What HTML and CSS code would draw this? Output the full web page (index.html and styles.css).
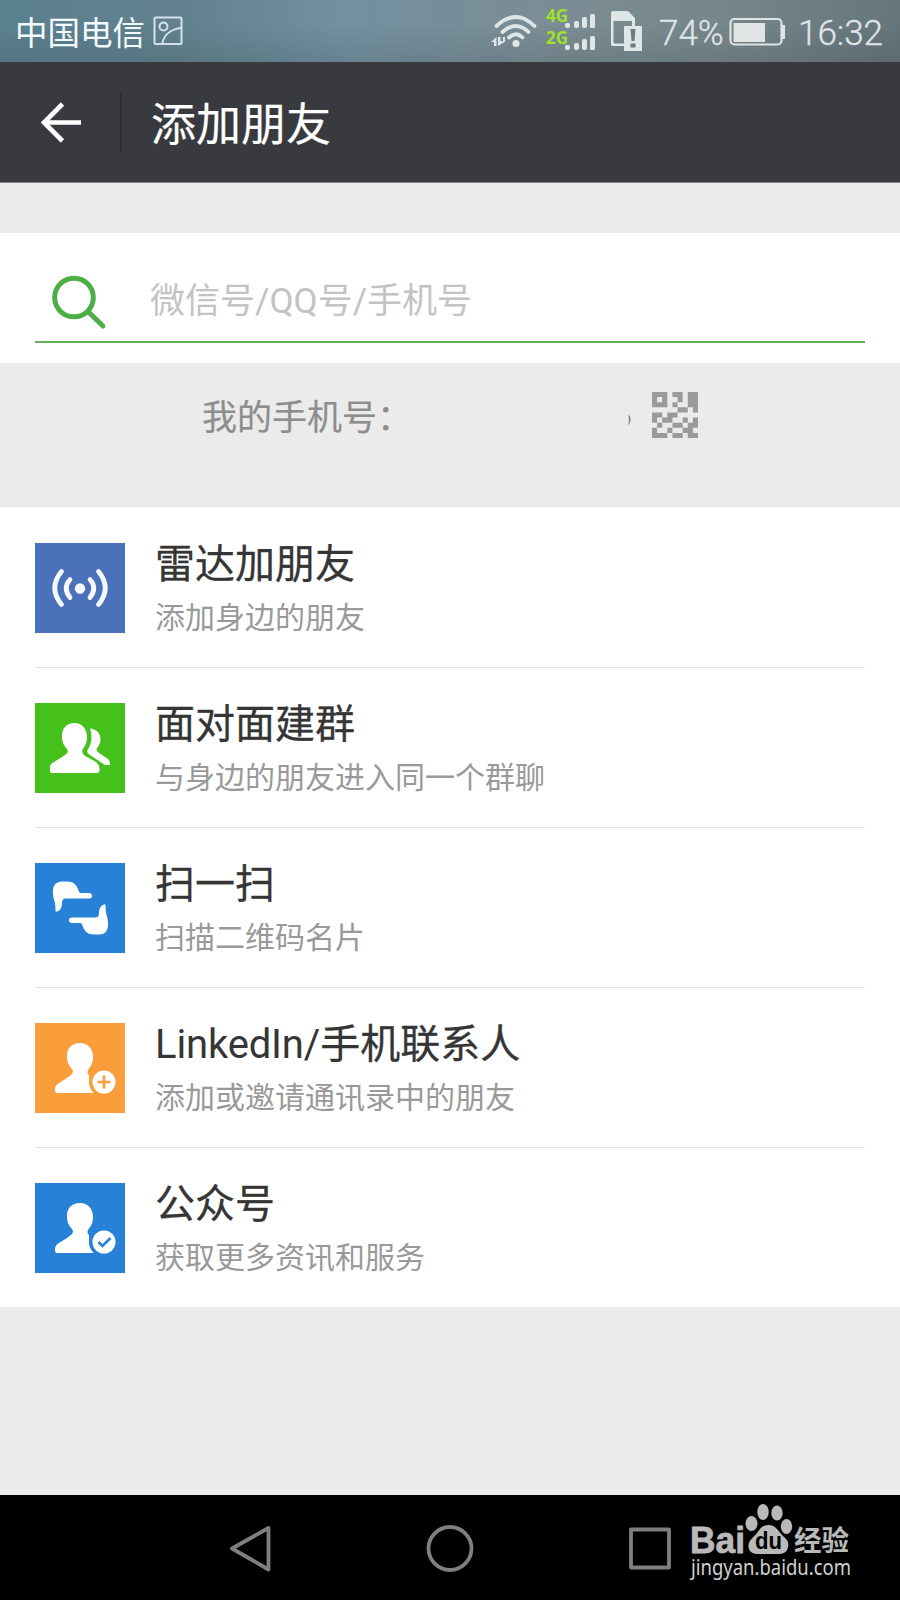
FILE: index.html
```html
<!DOCTYPE html>
<html lang="zh-CN">
<head>
<meta charset="utf-8">
<title>添加朋友</title>
<link rel="stylesheet" href="styles.css">
</head>
<body>
<div class="screen">
  <div class="status">
    <span class="carrier">中国电信</span>
    <svg class="picture" width="30" height="30" viewBox="0 0 30 30" fill="none" stroke="#d3e3ea" stroke-width="2"><rect x="1.500" y="1.500" width="27" height="26.500" rx="1"/><circle cx="10.500" cy="10.500" r="4"/><path d="M9 28C11 19 18 13 28 12"/></svg>
    <svg class="signals" width="156" height="62" viewBox="0 0 156 62">
      <g fill="none" stroke="#dfe6e8" stroke-width="3.800" stroke-linecap="round"><path d="M5.500 26Q25 8 43.500 26M11.500 32Q25 20 37.500 32M18 37.500Q25 31 31.500 37.500"/></g>
      <circle cx="25" cy="43.500" r="3.600" fill="#dfe6e8"/>
      <path fill="#dfe6e8" d="M0 42L5.500 37V46H3V42ZM7 37H9.500V41H15L7 46ZM12 37h2v4h-2z"/>
      <text class="net" x="55" y="22">4G</text><text class="net" x="55" y="43.500">2G</text>
      <g fill="#dfe6e8"><rect x="74" y="23" width="5" height="5" rx="2"/><rect x="83" y="21" width="5" height="7" rx="2"/><rect x="91" y="17" width="5" height="11" rx="2"/><rect x="99" y="14" width="5" height="14" rx="1.500"/><rect x="74" y="45" width="5" height="5" rx="2"/><rect x="83" y="43" width="5" height="7" rx="2"/><rect x="91" y="39" width="5" height="11" rx="2"/><rect x="99" y="36" width="5" height="14" rx="1.500"/></g>
      <path fill="#dfe6e8" fill-rule="evenodd" d="M122 11H137L144 18V26H151V51H133V46H121Q120 46 120 44V13Q120 11 122 11ZM122.500 21V43.500H133V26H141V21Z"/>
      <path fill="#6d7b80" d="M139.500 29H144.500L143.500 41H140.500ZM139.500 43.500h5v4h-5z"/>
    </svg>
    <span class="percent">74%</span>
    <svg class="battery" width="56" height="30" viewBox="0 0 56 30"><rect x="1.500" y="3" width="51" height="25.500" rx="4" fill="none" stroke="#dfe4e5" stroke-width="2.200"/><path fill="#dfe4e5" d="M4.500 7H36V26H4.500zM53 9h3v14h-3z"/></svg>
    <span class="clock">16:32</span>
  </div>

  <div class="header">
    <svg class="back" width="44" height="44" viewBox="0 0 44 44" fill="none" stroke="#fff" stroke-width="4.600"><path d="M42 22.500H5M23.500 4L5 22.500L23.500 41"/></svg>
    <div class="divider"></div>
    <h1 class="title">添加朋友</h1>
  </div>

  <div class="search">
    <div class="field">
      <svg class="glass" width="56" height="56" viewBox="0 0 56 56" fill="none" stroke="#4cae45" stroke-width="5" stroke-linecap="round"><circle cx="25" cy="23.500" r="19.300"/><path d="M40 38.500L54 52"/></svg>
      <span class="hint">微信号<i>/QQ</i>号<i>/</i>手机号</span>
    </div>
  </div>

  <div class="mine">
    <span class="mine-label">我的手机号：</span>
    <svg class="edge" width="4" height="14" viewBox="0 0 4 14"><path fill="#777" d="M0 1Q5 6 0 13Q2 7 0 1"/></svg>
    <svg class="qr" width="46" height="46" viewBox="0 0 9 9"><path fill="#9a9a9a" fill-rule="evenodd" d="M0 0h3v3h-3zM1 1v1h1v-1zM4 0h2v1h1v1h-2v-1h-1zM7 0h2v4h-1v-1h-1v-1h-1v-1h1zM4 2h1v1h-1zM5 3h2v1h-1v1h-2v1h-2v-1h1v-1h2zM0 4h2v1h-1v1h-1zM5 4h1v1h-1zM6 5h1v1h-1zM8 5h1v2h-2v-1h1zM1 6h1v1h-1zM4 6h2v1h-2zM0 7h1v1h2v1h-3zM3 7h1v1h-1zM6 7h2v1h1v1h-2v-1h-1zM4 8h2v1h-2z"/></svg>
  </div>

  <div class="list">
    <div class="row">
      <svg class="icon blue-violet" viewBox="0 0 90 90"><circle cx="45" cy="45.500" r="5.200" fill="#f3f9ff"/><path fill="none" stroke="#f3f9ff" stroke-width="4.800" stroke-linecap="round" d="M26.500 28.500Q13 45 26.500 61.500M35 36.500Q27.500 45 35 54.500M63.500 28.500Q77 45 63.500 61.500M55 36.500Q62.500 45 55 54.500"/></svg>
      <div class="body"><div class="name">雷达加朋友</div><div class="desc">添加身边的朋友</div></div>
    </div>
    <div class="row">
      <svg class="icon green" viewBox="0 0 90 90" fill="#fff"><path d="M39.500 20C47 20 52 26 52 34C52 40 50 43 47.500 46.500C46.500 51 50 53 54 55L61 59Q64.500 62 64.500 65V68Q64.500 70 62 70H17Q15 70 15 68V64Q15 61 19 59L27 54C32 51 34 49 32 46C29 43 27 39 27 33C27 25 32 20 39.500 20Z"/><path d="M55 25.500C61 26 65.500 30 65.500 36C65.500 41 63 44 61.500 46Q61 48 64 50L73 56Q75 58 75 60V62H70L55 52Q51 50 52.500 47C55 43 56.500 39 56.500 34Q56.500 29 55 25.500Z"/></svg>
      <div class="body"><div class="name">面对面建群</div><div class="desc">与身边的朋友进入同一个群聊</div></div>
    </div>
    <div class="row">
      <svg class="icon blue" viewBox="0 0 90 90" fill="#fff"><path id="hand" d="M20.500 48Q20.500 44 20 40C18 34 17 27 19 23Q21 18.500 28 18.500H32C39 18.500 41 22 43 26Q44 30 46 30H54Q57 30 57 33Q57 35.500 54 35.500H30Q27 36 27 40Q27 47 22 48.500Q20.500 49 20.500 48Z"/><use href="#hand" transform="rotate(180 45.500 45)"/></svg>
      <div class="body"><div class="name">扫一扫</div><div class="desc">扫描二维码名片</div></div>
    </div>
    <div class="row">
      <svg class="icon orange" viewBox="0 0 90 90"><path id="person" fill="#fff" d="M45 20C53 20 58 26 58 34C58 40 56 43 53 47Q51.500 50 54 52C54 58 54 65 59 70H22Q20 70 20 68V66Q20 62 24 60L32 55C38 51 39 49 37 46C34 43 32 39 32 33C32 25 37 20 45 20Z"/><circle cx="69" cy="59" r="15" fill="#fa9d3b"/><circle cx="69" cy="59" r="11.500" fill="#fff"/><path d="M62.500 59H75.500M69 52.500V65.500" stroke="#fa9d3b" stroke-width="2.600"/></svg>
      <div class="body"><div class="name"><i>LinkedIn/</i>手机联系人</div><div class="desc">添加或邀请通讯录中的朋友</div></div>
    </div>
    <div class="row">
      <svg class="icon blue" viewBox="0 0 90 90"><use href="#person"/><circle cx="69" cy="59" r="15" fill="#2782d7"/><circle cx="69" cy="59" r="11.500" fill="#fff"/><path d="M63.500 59L67.500 63L75.500 55" fill="none" stroke="#2782d7" stroke-width="2.600"/></svg>
      <div class="body"><div class="name">公众号</div><div class="desc">获取更多资讯和服务</div></div>
    </div>
  </div>

  <div class="navbar">
    <svg class="keys" width="900" height="105" viewBox="0 0 900 105">
      <g fill="none" stroke="#7f7f7f" stroke-width="3.800" stroke-linejoin="round"><path d="M232 53.500L268.500 33V74.500Z"/><circle cx="450" cy="53.500" r="21.500"/><rect x="631" y="34.500" width="38" height="38"/></g>
      <g fill="#b9b9b9"><ellipse cx="751.500" cy="28.500" rx="6" ry="7.500"/><ellipse cx="763" cy="17" rx="5.700" ry="8"/><ellipse cx="777" cy="18" rx="5.700" ry="7.500"/><ellipse cx="786.500" cy="31.500" rx="5.700" ry="7.500"/><path d="M768.500 30C776 30 778 36 783 41C788 45 789 48 788 52C787 58 783 59 778 59H758C752 59 748 56 748.500 50C749 45 753 43 757 38C760 34 762 30 768.500 30Z"/></g>
      <text class="brand" x="690" y="58" textLength="55" lengthAdjust="spacingAndGlyphs">Bai</text>
      <text class="du" x="755" y="54" textLength="27" lengthAdjust="spacingAndGlyphs">du</text>
      <text class="jing" x="794" y="56" textLength="55" lengthAdjust="spacingAndGlyphs">经验</text>
      <text class="site" x="691" y="80" textLength="160" lengthAdjust="spacingAndGlyphs">jingyan.baidu.com</text>
    </svg>
  </div>
</div>
</body>
</html>
```
FILE: styles.css
```css
* { box-sizing: border-box; }
body { margin: 0; font-family: "Noto Sans CJK SC", sans-serif; }
i { font-style: normal; font-family: Roboto, sans-serif; line-height: 1; -webkit-text-stroke: 0; }
svg { display: block; flex: none; }
.screen { width: 900px; height: 1600px; display: flex; flex-direction: column; background: #ebebeb; overflow: hidden; }

.status { height: 62px; flex: none; display: flex; align-items: center; padding-left: 15px; white-space: nowrap; background: linear-gradient(rgba(30,40,45,0) 40%, rgba(30,40,45,.13)), linear-gradient(90deg, #5a8090 0%, #62818e 20%, #7290a0 38%, #7b8d95 60%, #76868b 80%, #65757b 100%); }
.carrier { width: 138px; font-size: 32.5px; line-height: 62px; color: #f3fafc; }
.picture { margin-right: 308px; }
.percent, .clock { font-family: Roboto, sans-serif; font-weight: 300; font-size: 35px; line-height: 62px; color: #e0e5e7; padding-top: 6px; -webkit-text-stroke: .3px #e0e5e7; }
.percent { width: 70px; margin-left: 12px; }
.battery { margin-right: 13px; }
.net { font: bold 17px "Open Sans", sans-serif; fill: #a0e02c; }

.header { height: 121px; flex: none; display: flex; align-items: center; background: #393a3f; border-bottom: 1px solid #85858a; padding-left: 39px; }
.back { margin-right: 37px; }
.divider { width: 2px; height: 60px; background: #2f3034; margin-right: 29px; }
.title { margin: -1px 0 0; font-size: 45px; line-height: 60px; font-weight: 400; color: #fff; -webkit-text-stroke: .2px #fff; }

.search { height: 130px; flex: none; margin-top: 50px; padding: 0 35px; background: #fff; }
.field { height: 110px; display: flex; align-items: center; border-bottom: 2px solid #62b05a; padding: 26px 0 0 14px; }
.glass { margin-right: 45px; margin-top: 3px; }
.hint { font-size: 35px; line-height: 50px; color: #c3c3c3; margin-top: -5px; white-space: nowrap; }

.mine { height: 144px; flex: none; display: flex; align-items: flex-start; padding: 28px 0 0 202px; }
.mine-label { width: 426px; margin-top: -1px; font-size: 35px; line-height: 50px; color: #8d8d8d; -webkit-text-stroke: .2px #8d8d8d; }
.edge { margin: 22px 20px 0 0; }
.qr { margin-top: 1px; }

.list { flex: none; height: 800px; background: #fff; padding: 0 35px; }
.row { height: 160px; display: flex; padding-top: 36px; gap: 30px; }
.row + .row { border-top: 1px solid #e2e2e2; padding-top: 35px; }
.icon { width: 90px; height: 90px; }
.blue-violet { background: #4b71bb; }
.green { background: #46c01b; }
.blue { background: #2782d7; }
.orange { background: #fa9d3b; }
.body { display: flex; flex-direction: column; white-space: nowrap; }
.name { font-size: 40px; line-height: 54px; height: 54px; margin-top: -9px; color: #353535; -webkit-text-stroke: .3px #353535; }
.name i { letter-spacing: -.15px; }
.desc { font-size: 30px; line-height: 54px; color: #999; }

.navbar { height: 105px; flex: none; margin-top: auto; background: #000; }
.brand { font: bold 36px "Liberation Sans", sans-serif; fill: #b9b9b9; stroke: #b9b9b9; stroke-width: .8px; }
.du { font: bold 24px "Liberation Sans", sans-serif; fill: #000; }
.jing { font: bold 28px "Noto Sans CJK SC", sans-serif; fill: #b9b9b9; }
.site { font: 21px "Noto Sans", sans-serif; fill: #d0d0d0; }
```
